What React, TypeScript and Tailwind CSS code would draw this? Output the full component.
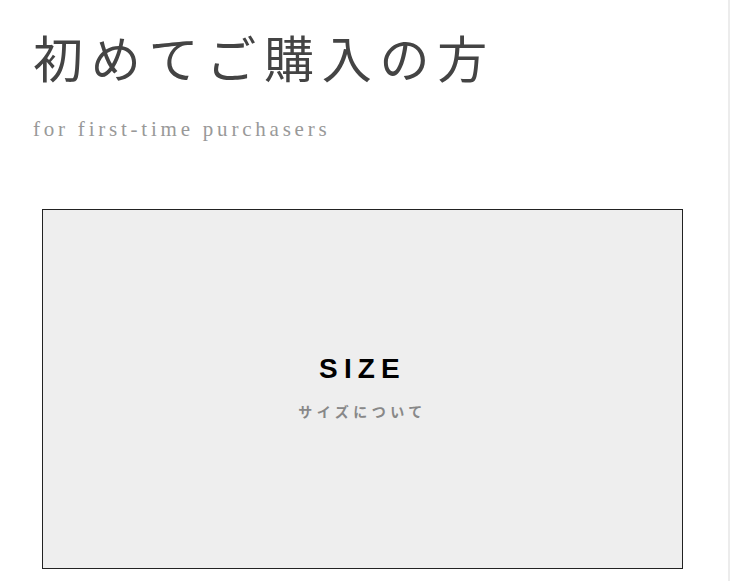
export default function App() {
  return (
    <div className="flex min-h-[581px] bg-white">
      <main className="flex-1">
        {/* Heading */}
        <header className="pl-[33px] pt-[24px]">
          <h1
            className="text-[50px] leading-[74px] tracking-[0.155em] text-[#444] font-normal"
            style={{ fontFamily: '"Liberation Serif", "Noto Sans CJK JP", serif' }}
          >
            初めてご購入の方
          </h1>
          <p
            className="mt-[17px] text-[21px] leading-[28px] tracking-[0.18em] text-[#999]"
            style={{ fontFamily: '"Liberation Serif", serif' }}
          >
            for first-time purchasers
          </p>
        </header>

        {/* Size card */}
        <section className="ml-[42px] mt-[66px] flex h-[360px] w-[641px] flex-col items-center justify-center border border-[#222] bg-[#eee] pb-[6px]">
          <h2
            className="text-[28px] leading-none font-bold tracking-[0.22em] text-black"
            style={{ fontFamily: '"Liberation Sans", Arial, sans-serif' }}
          >
            SIZE
          </h2>
          <p
            className="mt-[21px] text-[14px] leading-none font-bold tracking-[0.32em] text-[#888]"
            style={{ fontFamily: '"Noto Sans CJK JP", sans-serif' }}
          >
            サイズについて
          </p>
        </section>
      </main>
      <div className="w-[2px] bg-[#ececec]" />
    </div>
  );
}
